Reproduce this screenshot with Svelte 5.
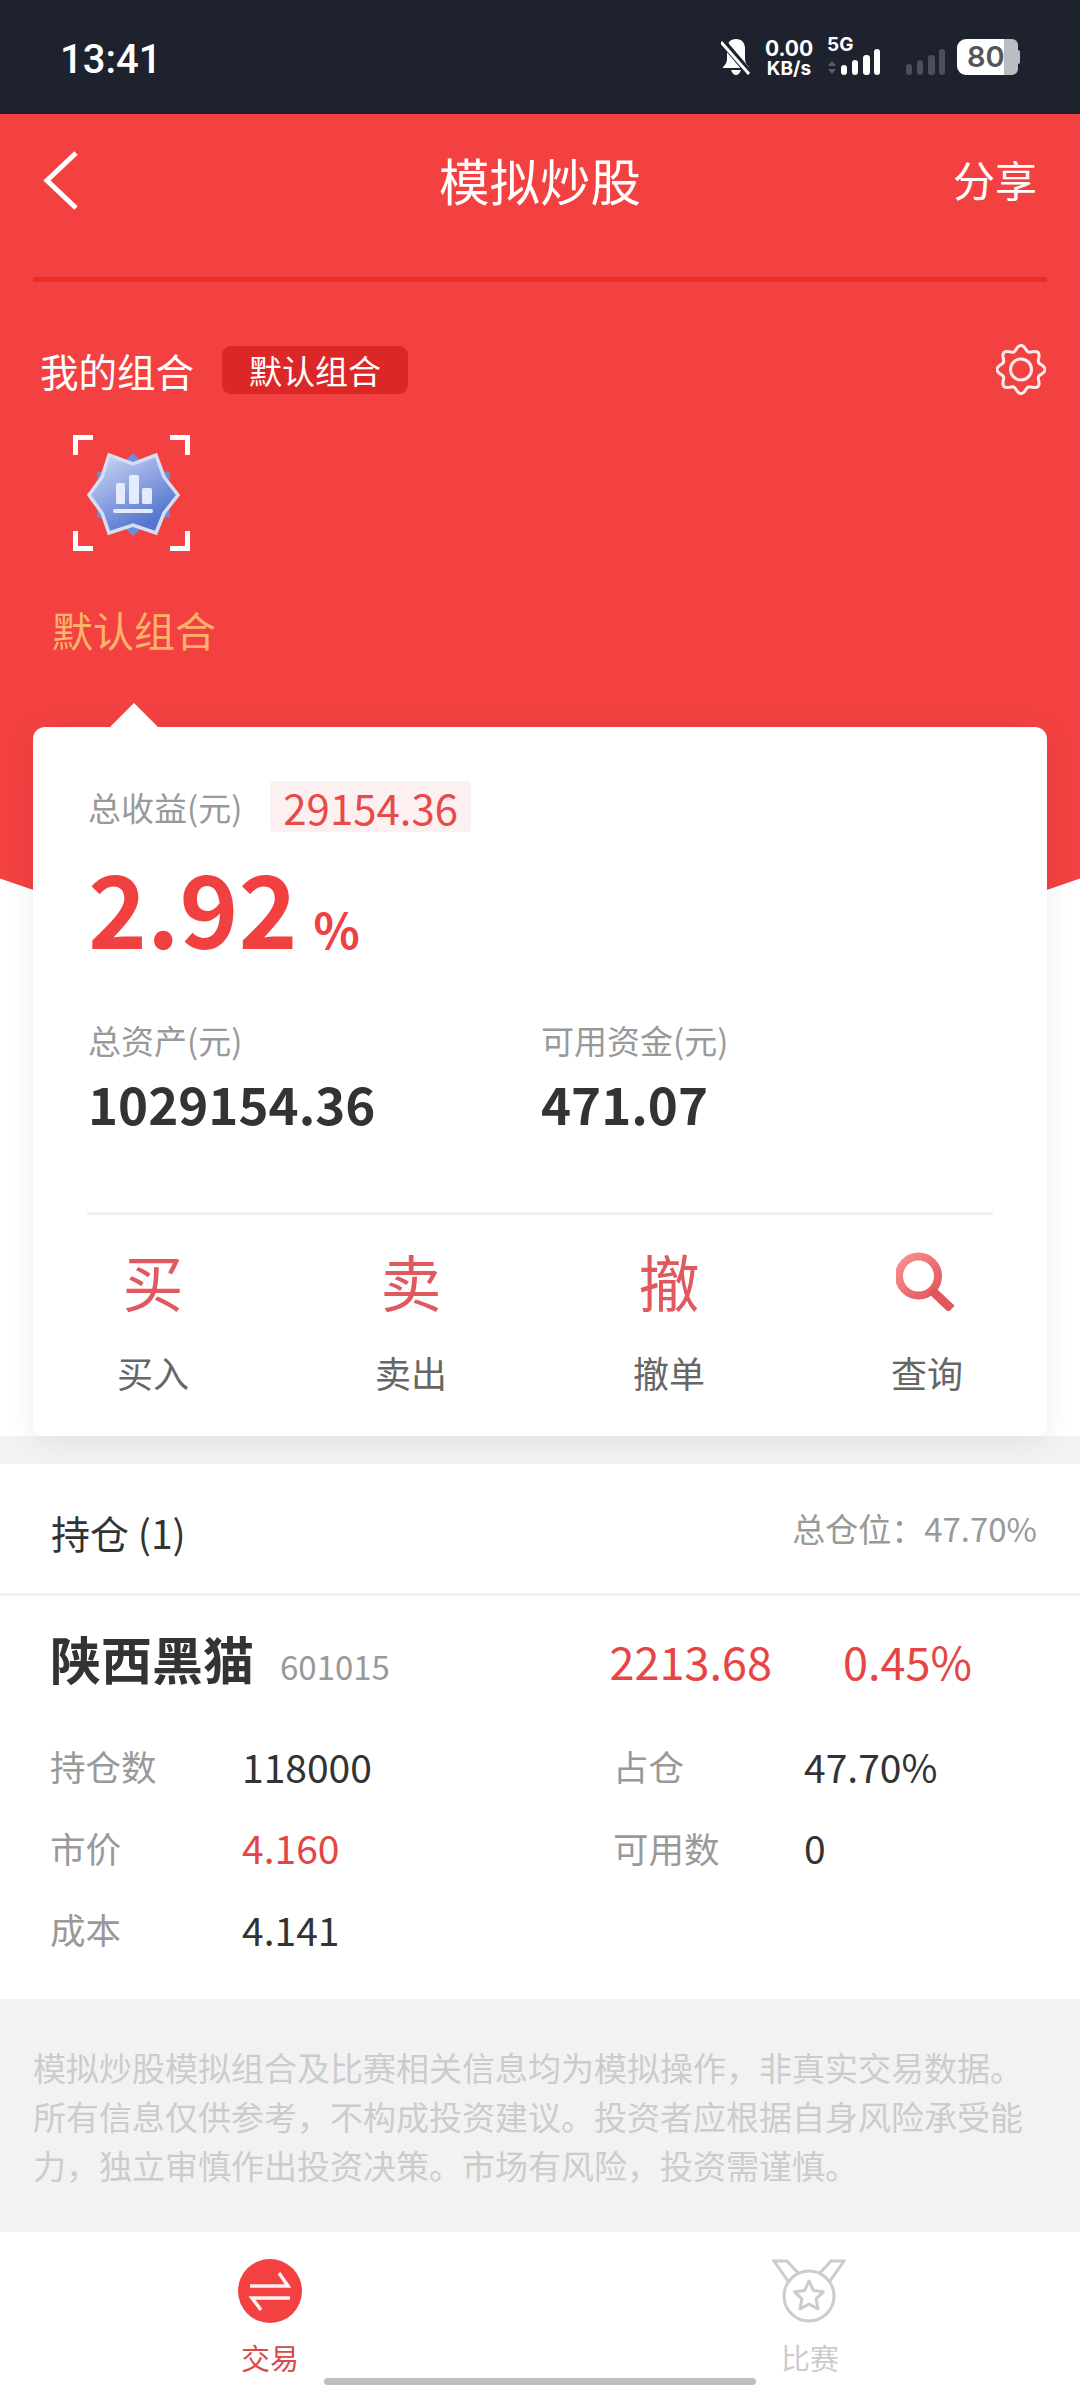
<script>
  const actions = [
    { glyph: '买', label: '买入' },
    { glyph: '卖', label: '卖出' },
    { glyph: '撤', label: '撤单' },
    { glyph: '', label: '查询' },
  ];

  const rows = [
    { a: '持仓数', b: '118000', c: '占仓', d: '47.70%' },
    { a: '市价', b: '4.160', red: true, c: '可用数', d: '0' },
    { a: '成本', b: '4.141', c: '', d: '' },
  ];

  // wavy gear outline, 8 lobes
  function gearPath() {
    let d = '';
    for (let i = 0; i < 96; i++) {
      const t = (i / 96) * Math.PI * 2;
      const r = 21.5 + 2.6 * Math.cos(8 * t);
      const x = 25 + r * Math.sin(t);
      const y = 25.5 - r * Math.cos(t);
      d += (i ? 'L' : 'M') + x.toFixed(2) + ' ' + y.toFixed(2);
    }
    return d + 'Z';
  }
</script>

<div class="page">
  <div class="status">
    <span class="time">13:41</span>
    <div class="status-right">
      <svg class="bell" width="30" height="36" viewBox="0 0 30 36">
        <path d="M15 0c-6 0-9 4-9 10v9c0 4-1 6-4 9v1h26v-1c-3-3-4-5-4-9V10c0-6-3-10-9-10z" fill="#fff" />
        <path d="M10 31c1 3 3 5 5 5s4-2 5-5z" fill="#fff" />
        <path d="M1 2l28 33" stroke="#1e222e" stroke-width="7" />
        <path d="M0 3l28 32" stroke="#fff" stroke-width="3" />
      </svg>
      <div class="speed">
        <span>0.00</span>
        <span class="unit">KB/s</span>
      </div>
      <div class="sim">
        <span class="five-g">5G</span>
        <svg width="54" height="34" viewBox="0 0 54 34">
          <path d="M1 17l4-5 4 5zM1 20l4 5 4-5z" fill="#5a5e68" />
          <rect x="14" y="16" width="6" height="10" rx="3" fill="#fff" />
          <rect x="25" y="11" width="6" height="15" rx="3" fill="#fff" />
          <rect x="36" y="6" width="7" height="20" rx="3" fill="#fff" />
          <rect x="47" y="0" width="6" height="26" rx="3" fill="#fff" />
        </svg>
      </div>
      <svg class="bars" width="40" height="26" viewBox="0 0 40 26">
        <rect x="0" y="15" width="6" height="11" rx="3" fill="#4b4f59" />
        <rect x="11" y="11" width="6" height="15" rx="3" fill="#4b4f59" />
        <rect x="22" y="6" width="7" height="20" rx="3" fill="#4b4f59" />
        <rect x="33" y="0" width="6" height="26" rx="3" fill="#4b4f59" />
      </svg>
      <div class="battery"><span>80</span></div>
    </div>
  </div>

  <div class="top">
    <div class="hero">
      <div class="nav">
        <svg class="back" width="36" height="60" viewBox="0 0 36 60">
          <path d="M33 2L4 29.500 33 57" fill="none" stroke="#fff" stroke-width="5" />
        </svg>
        <div class="nav-title">模拟炒股</div>
        <div class="nav-share">分享</div>
      </div>
      <div class="nav-line"></div>

      <div class="group-row">
        <span class="group-title">我的组合</span>
        <span class="group-tag">默认组合</span>
        <svg class="gear" width="50" height="51" viewBox="0 0 50 51">
          <path d={gearPath()} fill="none" stroke="#fff" stroke-width="3" opacity="0.9" />
          <circle cx="25" cy="25.500" r="10.500" fill="none" stroke="#fff" stroke-width="3" opacity="0.9" />
        </svg>
      </div>

      <svg class="badge" width="117" height="116" viewBox="73 435 117 116">
        <defs>
          <linearGradient id="star" x1="0.1" y1="0.1" x2="0.6" y2="0.9">
            <stop offset="0" stop-color="#c3cff2" />
            <stop offset="1" stop-color="#5677cf" />
          </linearGradient>
        </defs>
        <path d="M75.500 455v-17.500h17.500M170 437.500h17.500v17.500M187.500 531v17.500h-17.500M93 548.500H75.500v-17.500" fill="none" stroke="#fff" stroke-width="5" />
        <path d="M133 453L150 470 170 472 168 495 170 517 150 520 133 536 116 520 97 517 99 495 97 472 116 470z" fill="#6b8fd2" />
        <path d="M109 455L133 464 156 455 164 477 178 495 164 513 156 533 133 525 109 533 102 513 89 495 102 477z" fill="url(#star)" stroke="#d6def3" stroke-width="3.500" stroke-linejoin="miter" />
        <rect x="116" y="483" width="9" height="21" rx="1.500" fill="#e4ebfd" />
        <rect x="129" y="475" width="10" height="29" rx="1.500" fill="#e4ebfd" />
        <rect x="142" y="488" width="10" height="16" rx="1.500" fill="#e4ebfd" />
        <rect x="113" y="509" width="40" height="4" rx="2" fill="#e4ebfd" />
      </svg>

      <div class="badge-label">默认组合</div>
    </div>

    <div class="card">
      <div class="pointer"></div>
      <div class="profit-row">
        <span class="muted">总收益(元)</span>
        <span class="profit-tag">29154.36</span>
      </div>
      <div class="percent">2.92<small>%</small></div>
      <div class="assets">
        <div>
          <div class="muted">总资产(元)</div>
          <div class="asset-value">1029154.36</div>
        </div>
        <div>
          <div class="muted">可用资金(元)</div>
          <div class="asset-value">471.07</div>
        </div>
      </div>
      <div class="card-line"></div>
      <div class="actions">
        {#each actions as item}
          <div class="action">
            <div class="action-icon">
              {#if item.glyph}
                {item.glyph}
              {:else}
                <svg width="62" height="60" viewBox="0 0 62 60">
                  <defs>
                    <linearGradient id="lens" x1="0" y1="0" x2="1" y2="1">
                      <stop offset="0" stop-color="#fa9092" />
                      <stop offset="1" stop-color="#e2565b" />
                    </linearGradient>
                  </defs>
                  <circle cx="22.500" cy="25" r="19.500" fill="none" stroke="url(#lens)" stroke-width="8" />
                  <path d="M35.500 39l20 19" fill="none" stroke="#e2565b" stroke-width="9" />
                </svg>
              {/if}
            </div>
            <div class="action-label">{item.label}</div>
          </div>
        {/each}
      </div>
    </div>
  </div>

  <div class="band"></div>

  <div class="holdings">
    <div class="holdings-head">
      <span class="holdings-title">持仓 (1)</span>
      <span class="holdings-total">总仓位：47.70%</span>
    </div>
    <div class="stock">
      <div class="stock-top">
        <div class="stock-name"><b>陕西黑猫</b><span>601015</span></div>
        <div class="stock-num">2213.68</div>
        <div class="stock-num">0.45%</div>
      </div>
      {#each rows as row}
        <div class="stock-row">
          <span class="muted2">{row.a}</span>
          <span class:red={row.red}>{row.b}</span>
          <span class="muted2">{row.c}</span>
          <span>{row.d}</span>
        </div>
      {/each}
    </div>
  </div>

  <div class="notice">模拟炒股模拟组合及比赛相关信息均为模拟操作，非真实交易数据。所有信息仅供参考，不构成投资建议。投资者应根据自身风险承受能力，独立审慎作出投资决策。市场有风险，投资需谨慎。</div>

  <div class="tabbar">
    <div class="tab active">
      <svg width="74" height="64" viewBox="0 0 74 64">
        <circle cx="37" cy="32" r="32" fill="#f34141" />
        <path d="M17 27h38L46 14M57 39H19l9 12" fill="none" stroke="#fff" stroke-width="3.500" opacity="0.92" />
      </svg>
      <span>交易</span>
    </div>
    <div class="tab">
      <svg class="medal" width="74" height="64" viewBox="0 0 74 64">
        <g fill="none" stroke="#ccc" stroke-width="3">
          <path d="M16 22L2 2h13l12 13M58 22L72 2H59L47 15" />
          <circle cx="37" cy="37" r="25" />
          <path d="M37 22l4.400 9.500 10 1.300-7.300 7 1.900 10.200-9-5-9 5 1.900-10.200-7.300-7 10-1.300z" stroke-linejoin="round" />
        </g>
      </svg>
      <span>比赛</span>
    </div>
    <div class="home-bar"></div>
  </div>
</div>

<style>
  :global(body) {
    margin: 0;
    background: #fff;
  }

  .page {
    width: 1080px;
    height: 2388px;
    overflow: hidden;
    font-family: "Noto Sans CJK SC", "Noto Sans", sans-serif;
    color: #333;
  }

  .status {
    height: 114px;
    background: #1e222e;
    display: flex;
    justify-content: space-between;
    align-items: center;
    padding: 0 60px;
    box-sizing: border-box;
    font-family: Inter, sans-serif;
    color: #fff;
  }

  .time {
    font-family: Roboto, sans-serif;
    font-size: 40px;
    font-weight: 500;
    padding-top: 4px;
  }

  .status-right {
    display: flex;
    align-items: center;
    margin-right: 2px;
  }

  .bell {
    margin-right: 14px;
  }

  .speed {
    width: 48px;
    display: flex;
    flex-direction: column;
    align-items: center;
    font-size: 21px;
    font-weight: 700;
    line-height: 20px;
    margin-right: 14px;
    padding-top: 4px;
  }

  .unit {
    font-size: 19px;
  }

  .sim {
    width: 54px;
    height: 38px;
    position: relative;
    margin-right: 25px;
  }

  .five-g {
    position: absolute;
    left: 0;
    top: -2px;
    font-size: 19px;
    font-weight: 700;
    line-height: 18px;
  }

  .sim svg {
    position: absolute;
    left: 0;
    top: 11px;
  }

  .bars {
    margin-right: 11px;
    margin-top: 10px;
  }

  .battery {
    width: 61px;
    height: 36px;
    border-radius: 9px 6px 6px 9px;
    background: linear-gradient(to right, #fff 77%, #bcbdc2 77%);
    position: relative;
    color: #555;
    font-size: 29px;
    font-weight: 600;
    line-height: 36px;
    padding-left: 10px;
    box-sizing: border-box;
  }

  .battery::after {
    content: '';
    position: absolute;
    right: -2px;
    top: 11px;
    width: 3px;
    height: 14px;
    background: #bcbdc2;
    border-radius: 0 2px 2px 0;
  }

  .top {
    background: #fff;
  }

  .hero {
    height: 860px;
    background: #f34141;
    clip-path: circle(1590px at 540px -731px);
    box-sizing: border-box;
    padding-bottom: 1px;
    color: #fff;
  }

  .nav {
    height: 134px;
    display: grid;
    grid-template-columns: 1fr auto 1fr;
    align-items: center;
    padding: 0 43px;
  }

  .back {
    display: block;
  }

  .nav-title {
    font-size: 50.500px;
    line-height: 60px;
    padding-bottom: 4px;
  }

  .nav-share {
    font-size: 42px;
    line-height: 50px;
    text-align: right;
    padding-bottom: 4px;
  }

  .nav-line {
    height: 5px;
    margin: 29px 33px 0;
    background: #ee2b24;
  }

  .group-row {
    display: flex;
    align-items: center;
    height: 48px;
    margin-top: 64px;
    padding: 0 34px 0 40px;
  }

  .group-title {
    font-size: 38.500px;
    line-height: 48px;
  }

  .group-tag {
    width: 186px;
    height: 48px;
    margin-left: 28px;
    background: #dc2727;
    border-radius: 9px;
    font-size: 33px;
    line-height: 48px;
    text-align: center;
  }

  .gear {
    margin-left: auto;
    margin-top: -2px;
  }

  .badge {
    display: block;
    margin: 41px 0 0 73px;
  }

  .badge-label {
    margin: 48px 0 0 52px;
    font-size: 41px;
    line-height: 60px;
    color: #fbb26c;
  }

  .card {
    position: relative;
    height: 709px;
    margin: -247px 33px 0;
    padding: 54px 55px 0;
    box-sizing: border-box;
    background: #fff;
    border-radius: 12px;
    box-shadow: 0 6px 30px rgba(0, 0, 0, 0.07);
  }

  .pointer {
    position: absolute;
    left: 77px;
    top: -24px;
    width: 0;
    height: 0;
    border-left: 24px solid transparent;
    border-right: 24px solid transparent;
    border-bottom: 24px solid #fff;
  }

  .muted {
    color: #999;
    font-size: 33px;
    line-height: 40px;
  }

  .profit-row {
    display: flex;
    align-items: center;
    height: 51px;
  }

  .profit-tag {
    margin-left: 28px;
    padding: 0 13px;
    height: 51px;
    background: #fdf0f0;
    border-radius: 4px;
    color: #e84a4a;
    font-size: 42px;
    line-height: 51px;
  }

  .percent {
    height: 100px;
    margin-top: 24px;
    color: #f04040;
    font-size: 100px;
    font-weight: 700;
    line-height: 100px;
  }

  .percent small {
    margin-left: 16px;
    font-size: 48px;
    font-weight: 700;
  }

  .assets {
    display: grid;
    grid-template-columns: 453px 1fr;
    margin-top: 64px;
  }

  .asset-value {
    margin-top: 13px;
    font-size: 51px;
    font-weight: 700;
    line-height: 60px;
  }

  .card-line {
    height: 3px;
    margin: 79px -1px 0 -1px;
    background: #f0f0f0;
  }

  .actions {
    display: grid;
    grid-template-columns: repeat(4, 258px);
    justify-content: center;
    padding-top: 31px;
  }

  .action {
    text-align: center;
  }

  .action-icon {
    height: 70px;
    font-size: 61px;
    line-height: 70px;
    color: #e0595e;
    display: flex;
    align-items: center;
    justify-content: center;
  }

  .action-label {
    margin-top: 36px;
    font-size: 36px;
    line-height: 40px;
    color: #666;
  }

  .band {
    height: 28px;
    background: #f2f2f2;
  }

  .holdings {
    background: #fff;
  }

  .holdings-head {
    height: 129px;
    display: flex;
    justify-content: space-between;
    align-items: center;
    padding: 0 43px 0 51px;
    border-bottom: 3px solid #f2f2f2;
  }

  .holdings-title {
    font-size: 39px;
    line-height: 50px;
    margin-top: 6px;
  }

  .holdings-total {
    font-size: 33px;
    line-height: 44px;
    color: #999;
    margin-bottom: 2px;
  }

  .stock {
    height: 403px;
    box-sizing: border-box;
    padding: 27px 0 0 50px;
  }

  .stock-top {
    display: grid;
    grid-template-columns: 559.500px 233.500px 1fr;
    align-items: baseline;
    margin-bottom: 17px;
  }

  .stock-name {
    line-height: 70px;
  }

  .stock-name b {
    font-size: 51px;
    font-weight: 700;
  }

  .stock-name span {
    margin-left: 26px;
    font-size: 33px;
    color: #999;
  }

  .stock-num {
    font-size: 45px;
    color: #e54545;
  }

  .stock-row {
    display: grid;
    grid-template-columns: 192px 371px 191px 1fr;
    align-items: center;
    height: 81.500px;
    font-size: 39px;
  }

  .muted2 {
    font-size: 35.500px;
    color: #999;
  }

  .red {
    color: #e54545;
  }

  .notice {
    height: 233px;
    box-sizing: border-box;
    padding: 44px 33px 0;
    background: #f2f2f2;
    color: #ccc;
    font-size: 33px;
    line-height: 49px;
  }

  .tabbar {
    position: relative;
    height: 156px;
    display: grid;
    grid-template-columns: 1fr 1fr;
    background: #fff;
  }

  .tab {
    display: flex;
    flex-direction: column;
    align-items: center;
    padding-top: 27px;
    color: #ccc;
    font-size: 29px;
    line-height: 36px;
  }

  .tab svg {
    display: block;
    margin-bottom: 16px;
  }

  .medal {
    margin-left: -3px;
  }

  .tab.active {
    color: #d94a4a;
  }

  .home-bar {
    position: absolute;
    left: 324px;
    top: 146px;
    width: 432px;
    height: 7px;
    border-radius: 4px;
    background: #bfbfbf;
  }
</style>
